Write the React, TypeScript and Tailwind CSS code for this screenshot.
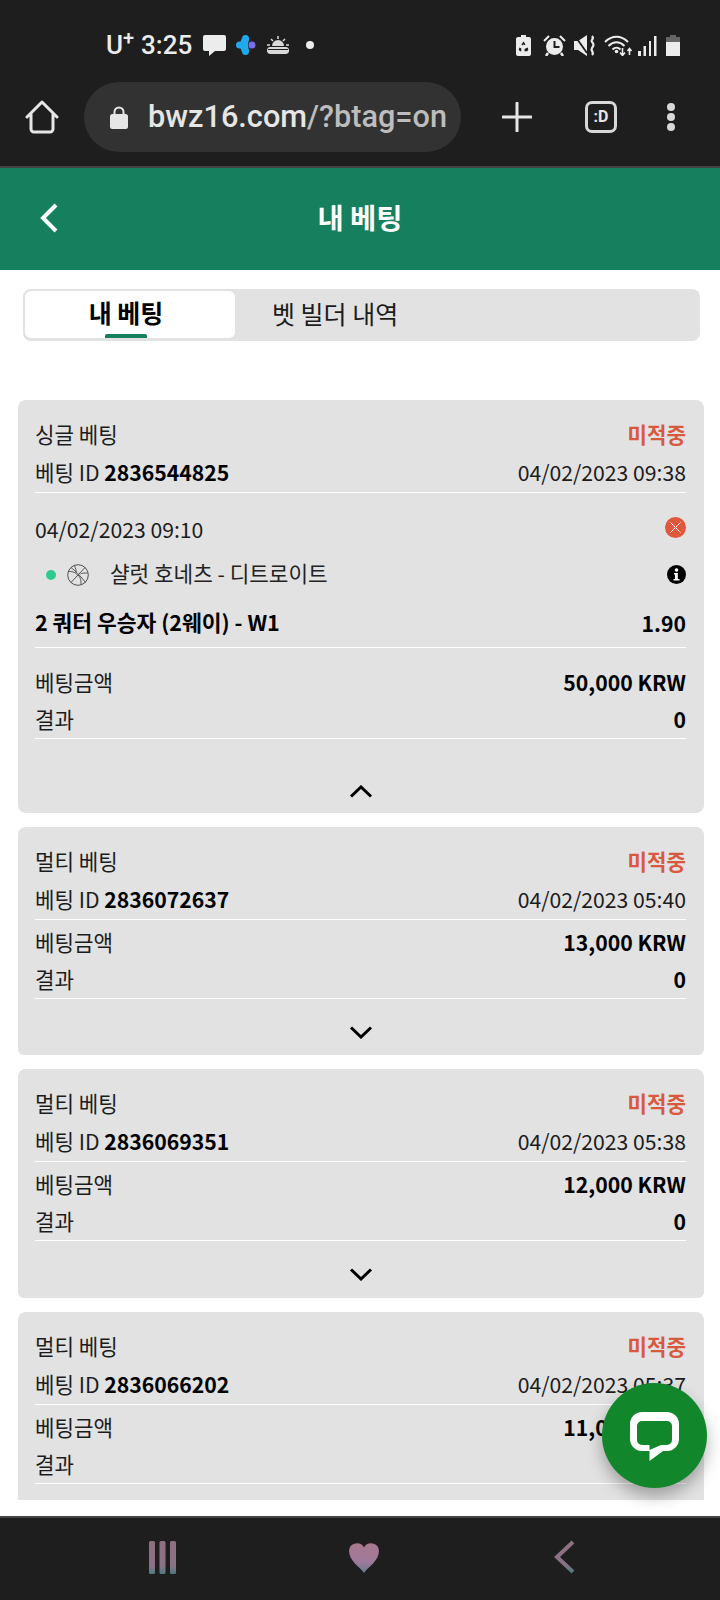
import React from "react";

const kr = "font-['Noto_Sans_CJK_KR','Noto_Sans',sans-serif]";

function StatusIcons() {
  return (
    <div className="flex items-center">
      <svg width="15" height="21" viewBox="0 0 15 21">
        <path d="M5 0h5v2h3a2 2 0 0 1 2 2v15a2 2 0 0 1-2 2H2a2 2 0 0 1-2-2V4a2 2 0 0 1 2-2h3z" fill="#ececec" />
        <path d="M7.500 6.500l2 3-1.300.8-.7-1.100-.8 1.200-1.300-.9zM3.500 12.500l1.800 1v2.800H3.900l-1.200-1.800zM11.500 12.500l.9 2-1.200 1.800H8.500v-2.400z" fill="#1e1e1e" />
      </svg>
      <svg width="23" height="21" viewBox="0 0 23 21" className="ml-[12px]">
        <path d="M1 6l5-5M22 6l-5-5" stroke="#ececec" strokeWidth="2" />
        <circle cx="11.500" cy="11.500" r="8.500" fill="#ececec" />
        <path d="M11.500 6v6h5" stroke="#1e1e1e" strokeWidth="2" fill="none" />
        <path d="M5 18l-2 3M18 18l2 3" stroke="#ececec" strokeWidth="2.500" />
      </svg>
      <svg width="22" height="21" viewBox="0 0 22 21" className="ml-[8px]">
        <path d="M0 6h4l9-6v21l-9-6H0z" fill="#ececec" />
        <path d="M1 1l12 17" stroke="#1e1e1e" strokeWidth="1.800" />
        <path d="M18 1c3 3-2 4 0 6s2 3 0 6 3 4 0 7" stroke="#ececec" strokeWidth="2.200" fill="none" />
      </svg>
      <svg width="29" height="21" viewBox="0 0 29 21" className="ml-[8px]">
        <path d="M1 7c7-7 16-7 23 0M4.500 11c5-5 11-5 16 0M8.500 14.500c2.500-2.500 5.500-2.500 8 0" stroke="#ececec" strokeWidth="2" fill="none" />
        <circle cx="12.500" cy="16.500" r="1.800" fill="#ececec" />
        <path d="M18.500 13v7M16 17.500l2.500 3 2.500-3M25.500 20v-6.500M23.500 16l2-2.500 2 2.500" stroke="#ececec" strokeWidth="1.600" fill="none" />
      </svg>
      <svg width="19" height="21" viewBox="0 0 19 21" className="ml-[5px]">
        <rect x="0" y="16" width="3" height="5" fill="#ececec" />
        <rect x="5.500" y="11" width="2.500" height="10" fill="#ececec" />
        <rect x="11" y="6" width="2" height="15" fill="#ececec" />
        <rect x="16" y="1" width="2.500" height="20" fill="#ececec" />
      </svg>
      <svg width="14" height="21" viewBox="0 0 14 21" className="ml-[9px]">
        <path d="M4 0h6v2h4v19H0V2h4z" fill="#666" />
        <rect x="0" y="7" width="14" height="14" fill="#ececec" />
      </svg>
    </div>
  );
}

function StatusBar() {
  return (
    <div className="flex items-center h-[82px] pt-[8px] pl-[106px] pr-[40px] font-['Roboto',sans-serif] text-[#ececec]">
      <div className="flex items-start w-[35px] text-[26px] font-medium leading-none">
        U<span className="text-[20px] font-medium leading-none -mt-[4px]">+</span>
      </div>
      <span className="text-[26px] font-medium leading-none w-[61px]">3:25</span>
      <svg width="23" height="21" viewBox="0 0 23 21" className="ml-[1px]">
        <path d="M2 0h19a2 2 0 0 1 2 2v12a2 2 0 0 1-2 2H12l-6 5v-5H2a2 2 0 0 1-2-2V2a2 2 0 0 1 2-2z" fill="#ececec" />
      </svg>
      <svg width="20" height="20" viewBox="0 0 20 20" className="ml-[10px]">
        <circle cx="9.500" cy="3.500" r="3.500" fill="#1ea8ee" />
        <circle cx="9.500" cy="16.500" r="3.500" fill="#1ea8ee" />
        <circle cx="3.500" cy="10" r="3.500" fill="#1ea8ee" />
        <path d="M6 3h7l-1 7 1 7H6l-3-7z" fill="#1ea8ee" />
        <circle cx="16" cy="10" r="3.500" fill="#7a6be8" />
      </svg>
      <svg width="22" height="19" viewBox="0 0 22 19" className="ml-[11px]">
        <path d="M11 0v3M4 3l2 2M18 3l-2 2M0 9h3M19 9h3" stroke="#d8d8d8" strokeWidth="1.500" />
        <path d="M5 10a6 6 0 0 1 12 0z" fill="#d8d8d8" />
        <path d="M3 18a3.500 3.500 0 0 1 1-7h14a3.500 3.500 0 0 1 1 7z" fill="#d8d8d8" />
        <path d="M1 13.500h20" stroke="#1e1e1e" strokeWidth="1" />
      </svg>
      <span className="w-[8px] h-[8px] rounded-full bg-[#ececec] ml-[17px]" />
      <div className="ml-auto">
        <StatusIcons />
      </div>
    </div>
  );
}

function BrowserBar() {
  return (
    <div className="flex items-center h-[86px] pb-[14px] border-b-2 border-[#444444]">
      <svg width="34" height="34" viewBox="0 0 34 34" className="ml-[25px]">
        <path d="M2 17L17 2l15 15M6 14v15a3 3 0 0 0 3 3h16a3 3 0 0 0 3-3V14" fill="none" stroke="#e6e6e6" strokeWidth="3" strokeLinejoin="round" strokeLinecap="round" />
      </svg>
      <div className="flex items-center w-[377px] h-[70px] ml-[25px] rounded-full bg-[#323232] pl-[26px] overflow-hidden">
        <svg width="18" height="23" viewBox="0 0 18 23">
          <path d="M4.500 9V6a4.500 4.500 0 0 1 9 0v3" fill="none" stroke="#e6e6e6" strokeWidth="2" />
          <rect x="0" y="8" width="18" height="15" rx="2.500" fill="#e6e6e6" />
        </svg>
        <span className="ml-[20px] font-['Roboto',sans-serif] font-medium text-[30.700px] leading-none text-[#bdbdbd] whitespace-nowrap">
          <span className="text-[#e6e6e6]">bwz16.com</span>/?btag=on
        </span>
      </div>
      <svg width="30" height="30" viewBox="0 0 30 30" className="ml-[41px]">
        <path d="M15 1v28M1 15h28" stroke="#e6e6e6" strokeWidth="3" strokeLinecap="round" />
      </svg>
      <div className="flex items-center justify-center w-[32px] h-[32px] ml-[53px] rounded-[7px] border-[3px] border-[#d8d8d8] font-['Roboto',sans-serif] font-bold text-[16px] leading-none text-[#e6e6e6]">
        :D
      </div>
      <div className="flex flex-col gap-[2px] ml-[50px]">
        <span className="w-[8px] h-[8px] rounded-full bg-[#d8d8d8]" />
        <span className="w-[8px] h-[8px] rounded-full bg-[#d8d8d8]" />
        <span className="w-[8px] h-[8px] rounded-full bg-[#d8d8d8]" />
      </div>
    </div>
  );
}

function Chevron({ up }: { up?: boolean }) {
  return (
    <svg width="24" height="13" viewBox="0 0 24 13">
      <path d={up ? "M2 11.500L12 2l10 9.500" : "M2 1.500L12 11l10-9.500"} fill="none" stroke="#000" strokeWidth="3" />
    </svg>
  );
}

function Row({ left, right, tall }: { left: React.ReactNode; right: React.ReactNode; tall?: boolean }) {
  return (
    <div className={tall ? "flex items-center justify-between h-[38px]" : "flex items-center justify-between h-[37px]"}>
      <div className="-mt-[2px]">{left}</div>
      <div className="-mt-[2px]">{right}</div>
    </div>
  );
}

function CardHead({ type, id, date }: { type: string; id: string; date: string }) {
  return (
    <div className="border-b border-white">
      <Row tall left={type} right={<span className="font-bold text-[#d9593f]">미적중</span>} />
      <Row
        tall
        left={
          <span>
            베팅 ID <b className="font-bold text-black">{id}</b>
          </span>
        }
        right={date}
      />
    </div>
  );
}

function Amounts({ amount, result }: { amount: string; result: string }) {
  return (
    <div className="border-b border-white">
      <Row left="베팅금액" right={<b className="font-bold text-black">{amount}</b>} />
      <Row left="결과" right={<b className="font-bold text-black">{result}</b>} />
    </div>
  );
}

function MultiCard({ id, date, amount, tall }: { id: string; date: string; amount: string; tall?: boolean }) {
  return (
    <div className={tall ? "h-[229px] shrink-0 rounded-t-[8px] rounded-b-[6px] bg-[#e2e2e2] pl-[17px] pr-[18px] pt-[16px] text-[21.2px] text-[#1c1c1c]" : "h-[228px] shrink-0 rounded-t-[8px] rounded-b-[6px] bg-[#e2e2e2] pl-[17px] pr-[18px] pt-[16px] text-[21.2px] text-[#1c1c1c]"}>
      <CardHead type="멀티 베팅" id={id} date={date} />
      <div className="pt-[4px]">
        <Amounts amount={amount} result="0" />
      </div>
      <div className="flex justify-center pt-[27px]">
        <Chevron />
      </div>
    </div>
  );
}

function SingleCard() {
  return (
    <div className="h-[413px] shrink-0 rounded-[8px] bg-[#e2e2e2] pl-[17px] pr-[18px] pt-[16px] text-[21.2px] text-[#1c1c1c]">
      <CardHead type="싱글 베팅" id="2836544825" date="04/02/2023 09:38" />
      <div className="pt-[18px] pb-[4px] border-b border-white">
        <Row
          left="04/02/2023 09:10"
          right={
            <svg width="21" height="21" viewBox="0 0 21 21" className="block -mt-[2px]">
              <circle cx="10.500" cy="10.500" r="10.500" fill="#e0583c" />
              <path d="M5.500 5.500l10 10M15.500 5.500l-10 10" stroke="#fff" strokeWidth="1" />
            </svg>
          }
        />
        <div className="flex items-center h-[37px] mt-[8px] text-[21.300px] text-[#222]">
          <span className="w-[10px] h-[10px] rounded-full bg-[#2dcb8f] ml-[11px]" />
          <svg width="22" height="22" viewBox="0 0 22 22" className="ml-[11px]">
            <g fill="none" stroke="#444" strokeWidth="0.900">
              <circle cx="11" cy="11" r="10.300" />
              <path d="M18 3.500L4 18.500M4 3.500c4 3 10 9 14.500 15M1.500 7.500c3 0 6 0 9 3.500M11 11c3 3 3 6 3 9.500M20.500 9c-3 0-6 0-7 1M7.500 1.500c1 3 2 5 1.500 7" />
            </g>
          </svg>
          <span className="ml-[21px] -mt-[3px]">샬럿 호네츠 - 디트로이트</span>
          <svg width="19" height="19" viewBox="0 0 19 19" className="ml-auto">
            <circle cx="9.500" cy="9.500" r="9.500" fill="#000" />
            <circle cx="9.500" cy="5" r="1.800" fill="#fff" />
            <path d="M7 8h3.800v6H12.500v1.500h-6V14h1.500V9.500H7z" fill="#fff" />
          </svg>
        </div>
        <div className="mt-[12px] mb-[1px]">
          <Row
            left={<b className="font-bold text-[21.500px] text-black">2 쿼터 우승자 (2웨이) - W1</b>}
            right={<b className="font-bold text-black">1.90</b>}
          />
        </div>
      </div>
      <div className="pt-[16px]">
        <Amounts amount="50,000 KRW" result="0" />
      </div>
      <div className="flex justify-center pt-[46px]">
        <Chevron up />
      </div>
    </div>
  );
}

function Tabs() {
  return (
    <div className="flex w-[677px] h-[52px] ml-[23px] p-[2px] pb-[3px] rounded-[8px] bg-[#e2e2e2] text-[25px] text-[#1c1c1c]">
      <div className="relative flex items-center justify-center w-[210px] pr-[8px] pb-[3px] rounded-[6px] bg-white font-bold text-black">
        내 베팅
        <span className="absolute bottom-0 left-[80px] w-[42px] h-[4px] rounded-t-[2px] bg-[#16805e]" />
      </div>
      <div className="flex items-center pl-[37px] pb-[2px]">벳 빌더 내역</div>
    </div>
  );
}

function NavBar() {
  return (
    <div className="flex items-center h-[84px] shrink-0 pb-[4px] border-t-2 border-[#444444] bg-[#1e1e1e]">
      <svg width="27" height="33" viewBox="0 0 27 33" className="ml-[149px]">
        <defs>
          <linearGradient id="nav" x1="0" y1="0" x2="0" y2="1">
            <stop offset="0" stopColor="#8f7080" />
            <stop offset="0.75" stopColor="#8a7285" />
            <stop offset="1" stopColor="#4f7a80" />
          </linearGradient>
          <linearGradient id="heart" x1="0" y1="0" x2="0" y2="1">
            <stop offset="0" stopColor="#a8788c" />
            <stop offset="0.6" stopColor="#a07a9c" />
            <stop offset="1" stopColor="#68808a" />
          </linearGradient>
        </defs>
        <rect x="0" y="0" width="6" height="33" rx="1.500" fill="url(#nav)" />
        <rect x="10.500" y="0" width="6" height="33" rx="1.500" fill="url(#nav)" />
        <rect x="21" y="0" width="6" height="33" rx="1.500" fill="url(#nav)" />
      </svg>
      <svg width="30" height="31" viewBox="0 0 30 31" className="ml-[173px]">
        <path d="M15 31C12 26 0 19 0 9a8 8 0 0 1 15-3.500A8 8 0 0 1 30 9c0 10-12 17-15 22z" fill="url(#heart)" />
      </svg>
      <svg width="22" height="34" viewBox="0 0 22 34" className="ml-[174px]">
        <path d="M20 2L4 17l16 15" fill="none" stroke="url(#nav)" strokeWidth="4" />
      </svg>
    </div>
  );
}

export default function App() {
  return (
    <div className={`relative flex flex-col w-[720px] h-[1600px] overflow-hidden bg-white ${kr}`}>
      <div className="shrink-0 bg-[#1e1e1e]">
        <StatusBar />
        <BrowserBar />
      </div>
      <header className="flex items-center justify-center relative h-[102px] shrink-0 bg-[#16805e] text-white">
        <svg width="20" height="30" viewBox="0 0 20 30" className="absolute left-[39px] top-[35px]">
          <path d="M17 2L4 15l13 13" fill="none" stroke="#fff" strokeWidth="4" />
        </svg>
        <span className="text-[28.500px] font-bold leading-none -mt-[3px]">내 베팅</span>
      </header>
      <main className="flex-1 min-h-0 mb-[16px] pt-[19px] overflow-hidden">
        <Tabs />
        <div className="flex flex-col gap-[14px] w-[686px] mt-[59px] ml-[18px]">
          <SingleCard />
          <MultiCard id="2836072637" date="04/02/2023 05:40" amount="13,000 KRW" />
          <MultiCard tall id="2836069351" date="04/02/2023 05:38" amount="12,000 KRW" />
          <MultiCard id="2836066202" date="04/02/2023 05:37" amount="11,000 KRW" />
        </div>
      </main>
      <NavBar />
      <button className="absolute left-[602px] top-[1383px] flex items-center justify-center w-[105px] h-[105px] rounded-full bg-[#12862a] shadow-[0_8px_16px_rgba(0,0,0,0.3)]">
        <svg width="49" height="49" viewBox="0 0 49 49" className="mt-[2px]">
          <path
            fillRule="evenodd"
            d="M12 0h25a12 12 0 0 1 12 12v15a12 12 0 0 1-12 12h-4L19.500 49V39H12A12 12 0 0 1 0 27V12A12 12 0 0 1 12 0zm0 9a5 5 0 0 0-5 5v14a5 5 0 0 0 5 5h7.500v5L31 33h6a5 5 0 0 0 5-5V14a5 5 0 0 0-5-5z"
            fill="#fff"
          />
        </svg>
      </button>
    </div>
  );
}
